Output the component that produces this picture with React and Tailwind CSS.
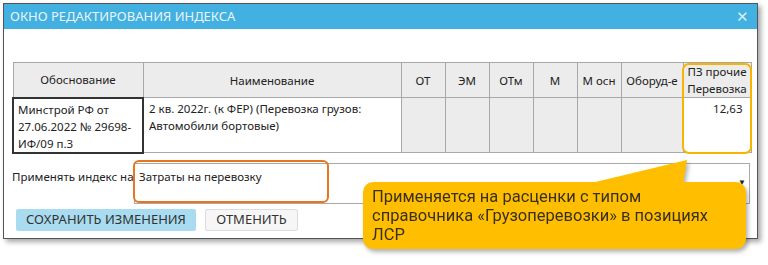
import React from 'react';

const cols = [
  { key: 'basis', title: 'Обоснование', width: 130 },
  { key: 'name', title: 'Наименование', width: 258 },
  { key: 'ot', title: 'ОТ', width: 44 },
  { key: 'em', title: 'ЭМ', width: 44 },
  { key: 'otm', title: 'ОТм', width: 44 },
  { key: 'm', title: 'М', width: 44 },
  { key: 'mosn', title: 'М осн', width: 44 },
  { key: 'equip', title: 'Оборуд-е', width: 62 },
  { key: 'pz', title: 'ПЗ прочие Перевозка', width: 68 },
];

function IndexTable() {
  return (
    <table className="table-fixed border-collapse text-[11.5px] text-[#222]">
      <colgroup>
        {cols.map((c) => (
          <col key={c.key} style={{ width: c.width }} />
        ))}
      </colgroup>
      <thead>
        <tr className="h-[34px] bg-[#ececec]">
          {cols.map((c) => (
            <th
              key={c.key}
              className="border border-[#a8a8a8] px-0 text-center font-normal leading-[17px]"
            >
              {c.title}
            </th>
          ))}
        </tr>
      </thead>
      <tbody>
        <tr className="h-[55px] align-top leading-[17px]">
          <td className="border-2 border-[#333] bg-white px-[4px] pt-[2px]">
            Минстрой РФ от 27.06.2022 № 29698-ИФ/09 п.3
          </td>
          <td className="border border-[#a8a8a8] bg-white px-[5px] pt-[2px]">
            2 кв. 2022г. (к ФЕР) (Перевозка грузов: Автомобили бортовые)
          </td>
          <td className="border border-[#a8a8a8] bg-[#ececec]" />
          <td className="border border-[#a8a8a8] bg-[#ececec]" />
          <td className="border border-[#a8a8a8] bg-[#ececec]" />
          <td className="border border-[#a8a8a8] bg-[#ececec]" />
          <td className="border border-[#a8a8a8] bg-[#ececec]" />
          <td className="border border-[#a8a8a8] bg-[#ececec]" />
          <td className="border border-[#a8a8a8] bg-white pr-[8px] pt-[2px] text-right">
            12,63
          </td>
        </tr>
      </tbody>
    </table>
  );
}

export default function App() {
  return (
    <div
      className="relative h-[265px] w-[768px] overflow-hidden bg-white"
      style={{ fontFamily: '"Noto Sans", "Open Sans", sans-serif' }}
    >
      <div className="ml-[3px] mt-[3px] flex h-[236px] w-[755px] flex-col border border-[#555] bg-white shadow-[3px_3px_5px_rgba(0,0,0,0.35)]">
        <div className="flex h-[25px] items-center justify-between bg-[#42b0e0] pl-[6px] pr-[8px]">
          <span className="text-[13px] text-[#e9f5fb]">ОКНО РЕДАКТИРОВАНИЯ ИНДЕКСА</span>
          <span className="text-[15px] leading-none text-[#d7eef9]">✕</span>
        </div>

        <div className="ml-[8px] mt-[33px]">
          <IndexTable />
        </div>

        <div className="ml-[8px] mt-[9px] flex h-[41px] w-[738px] text-[11.5px] text-[#222]">
          <div className="w-[122px] shrink-0 whitespace-nowrap pt-[5px]">
            Применять индекс на:
          </div>
          <div className="relative flex-1 border border-[#a8a8a8] bg-white pl-[4px] pt-[4px]">
            Затраты на перевозку
            <span className="absolute right-[3px] top-[14px] text-[8px] leading-none text-[#222]">▼</span>
          </div>
        </div>

        <div className="ml-[12px] mt-[5px] flex gap-[9px] text-[13px] text-[#333]">
          <button className="h-[22px] w-[180px] rounded-[2px] bg-[#a9dcf0]">СОХРАНИТЬ ИЗМЕНЕНИЯ</button>
          <button className="h-[22px] w-[93px] rounded-[2px] border border-[#dcdcdc] bg-[#f6f6f6]">ОТМЕНИТЬ</button>
        </div>
      </div>

      {/* highlight on last column */}
      <div className="absolute left-[682px] top-[63px] h-[91px] w-[70px] rounded-[7px] border-2 border-[#f7b500]" />

      {/* highlight on combo */}
      <div className="absolute left-[133px] top-[160px] h-[43px] w-[196px] rounded-[6px] border-2 border-[#e8761f]" />

      {/* callout */}
      <div className="absolute left-[363px] top-[182px] drop-shadow-[2px_3px_2px_rgba(0,0,0,0.3)]">
        <svg className="absolute left-[220px] top-[-23px]" width="110" height="26" viewBox="0 0 110 26">
          <polygon points="4,25 104,1 100,25" fill="#ffbf00" />
        </svg>
        <div
          className="relative h-[67px] w-[383px] rounded-[10px] bg-[#ffbf00] pl-[9px] pt-[5px] text-[16.5px] leading-[19px] text-[#3a3020]"
          style={{ fontFamily: 'Roboto, sans-serif' }}
        >
          Применяется на расценки с типом
          <br />
          справочника «Грузоперевозки» в позициях
          <br />
          ЛСР
        </div>
      </div>
    </div>
  );
}
